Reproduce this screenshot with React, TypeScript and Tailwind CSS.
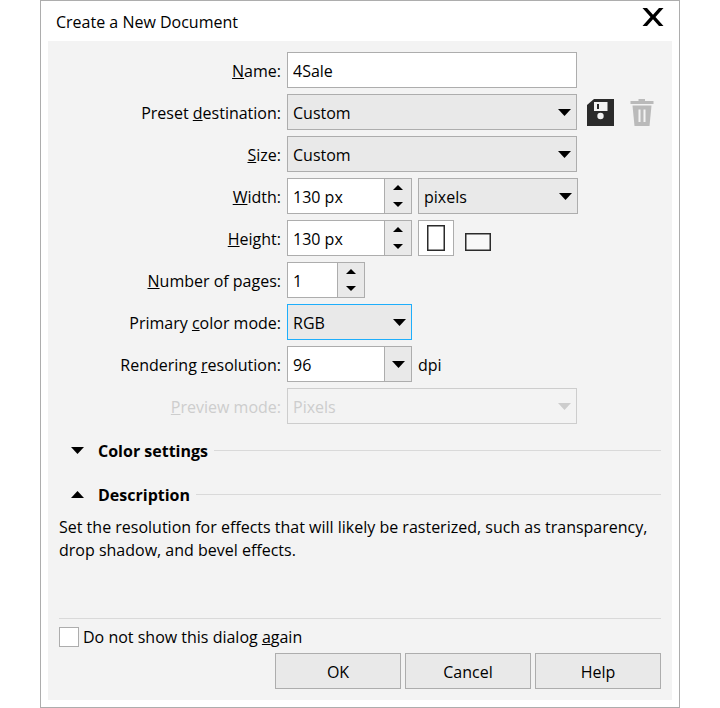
import { useState } from "react"
import type { ReactNode } from "react"
import clsx from "clsx"

// ─── Icons ───────────────────────────────────────────────────────────────────

function Caret({ up, small, className }: { up?: boolean; small?: boolean; className?: string }) {
  return (
    <svg
      width={small ? 10 : 13}
      height={small ? 5 : 7}
      viewBox="0 0 12 6"
      preserveAspectRatio="none"
      fill="currentColor"
      aria-hidden="true"
      className={className}
    >
      <path d={up ? "M0 6 6 0l6 6z" : "M0 0h12L6 6z"} />
    </svg>
  )
}

function CloseIcon() {
  return (
    <svg width="22" height="18" viewBox="0 0 22 18" fill="#000" aria-hidden="true">
      <path d="M.5 0h4.500L11 6.800 17 0h4.500l-8 9 8 9H17l-6-6.800L5 18H.5l8-9z" />
    </svg>
  )
}

function SaveIcon() {
  return (
    <svg width="27" height="27" viewBox="0 0 27 27" aria-hidden="true">
      <path d="M7 0h20v27H0V6z" fill="#2b2b2b" />
      <path d="M7 3h13.500v9H7z" fill="#f3f3f3" />
      <path d="M10 5h2v5h-2z" fill="#2b2b2b" />
      <circle cx="13.500" cy="17" r="3.200" fill="#f3f3f3" />
    </svg>
  )
}

function TrashIcon() {
  return (
    <svg width="24" height="27" viewBox="0 0 24 27" aria-hidden="true">
      <path d="M8.500 0h6.500v2h8.500v3H.5V2h8z" fill="#bababa" />
      <path d="M2.500 6.500h19L19.500 27h-15z" fill="#bababa" />
      <path d="M9.500 10.500v12.500M14.500 10.500v12.500" stroke="#f3f3f3" strokeWidth="2" />
    </svg>
  )
}

// ─── Form parts ──────────────────────────────────────────────────────────────

function Row({ id, label, disabled, children }: { id: string; label: ReactNode; disabled?: boolean; children: ReactNode }) {
  return (
    <div className="grid grid-cols-[222px_1fr] items-center gap-1.5">
      <label htmlFor={id} className={clsx("pt-0.5 text-right", disabled && "text-[#cdcdcd]")}>
        {label}
      </label>
      <div className="flex items-center gap-1.5">{children}</div>
    </div>
  )
}

function Key({ children }: { children: ReactNode }) {
  return <span className="underline decoration-1 underline-offset-1">{children}</span>
}

interface SelectProps {
  id?: string
  label?: string
  options: string[]
  className: string
  active?: boolean
  disabled?: boolean
}

function Select({ id, label, options, className, active, disabled }: SelectProps) {
  return (
    <div
      className={clsx(
        "relative h-9 border",
        active ? "border-[#1eaefb]" : disabled ? "border-[#cdcdcd]" : "border-[#adadad]",
        disabled ? "bg-[#f3f3f3] text-[#cdcdcd]" : "bg-[#e9e9e9]",
        className,
      )}
    >
      <select
        id={id}
        aria-label={label}
        disabled={disabled}
        className="h-full w-full appearance-none px-[5px] pt-0.5 outline-none disabled:opacity-100"
      >
        {options.map(o => (
          <option key={o}>{o}</option>
        ))}
      </select>
      <Caret className="pointer-events-none absolute right-[5px] top-3.5" />
    </div>
  )
}

interface SpinnerProps {
  id: string
  value: number
  unit?: string
  onChange: (value: number) => void
  className: string
}

function Spinner({ id, value, unit, onChange, className }: SpinnerProps) {
  return (
    <div className={clsx("flex h-9 border border-[#adadad] bg-white", className)}>
      <input
        id={id}
        value={unit ? `${value} ${unit}` : value}
        onChange={e => onChange(parseInt(e.target.value) || 0)}
        className="min-w-0 flex-1 px-[5px] pt-0.5 outline-none"
      />
      <div className="flex w-[27px] flex-col border-l border-[#adadad] bg-[#e9e9e9]">
        <button
          aria-label="Increase"
          onClick={() => onChange(value + 1)}
          className="flex flex-1 items-center justify-center"
        >
          <Caret up small />
        </button>
        <button
          aria-label="Decrease"
          onClick={() => onChange(Math.max(1, value - 1))}
          className="flex flex-1 items-center justify-center"
        >
          <Caret small />
        </button>
      </div>
    </div>
  )
}

function SectionHeader({ title, open, onToggle }: { title: string; open: boolean; onToggle: () => void }) {
  return (
    <div className="flex h-6 items-center gap-1.5">
      <button onClick={onToggle} aria-expanded={open} className="flex items-center gap-3.5 pl-3 font-bold">
        <Caret up={open} />
        <span className="pt-0.5">{title}</span>
      </button>
      <div className="h-px flex-1 bg-[#d9d9d9]" />
    </div>
  )
}

// ─── Dialog ──────────────────────────────────────────────────────────────────

export default function App() {
  const [name, setName] = useState("4Sale")
  const [width, setWidth] = useState(130)
  const [height, setHeight] = useState(130)
  const [pages, setPages] = useState(1)
  const [resolution, setResolution] = useState("96")
  const [portrait, setPortrait] = useState(true)
  const [colorOpen, setColorOpen] = useState(false)
  const [descriptionOpen, setDescriptionOpen] = useState(true)

  return (
    <div className="min-h-screen bg-white font-['Open_Sans','Noto_Sans',sans-serif] text-base leading-6 text-black">
      <div
        role="dialog"
        aria-labelledby="dialog-title"
        className="mx-auto flex min-h-screen w-full max-w-[640px] flex-col border border-[#adadad] bg-white px-[7px] pb-[7px]"
      >
        {/* Title bar */}
        <div className="flex h-10 items-center justify-between px-2">
          <h1 id="dialog-title" className="pt-0.5">Create a New Document</h1>
          <button aria-label="Close" className="pb-2">
            <CloseIcon />
          </button>
        </div>

        <div className="flex flex-1 flex-col bg-[#f3f3f3] px-[11px] py-[11px]">
          {/* Settings */}
          <div className="flex flex-col gap-1.5">
            <Row id="name" label={<><Key>N</Key>ame:</>}>
              <input
                id="name"
                value={name}
                onChange={e => setName(e.target.value)}
                className="h-9 w-[290px] border border-[#adadad] bg-white px-[5px] pt-0.5 outline-none"
              />
            </Row>
            <Row id="preset" label={<>Preset <Key>d</Key>estination:</>}>
              <Select id="preset" options={["Custom"]} className="w-[290px]" />
              <div className="flex items-center gap-4 pl-1">
                <button aria-label="Save preset"><SaveIcon /></button>
                <button aria-label="Delete preset" disabled><TrashIcon /></button>
              </div>
            </Row>
            <Row id="size" label={<><Key>S</Key>ize:</>}>
              <Select id="size" options={["Custom"]} className="w-[290px]" />
            </Row>
            <Row id="width" label={<><Key>W</Key>idth:</>}>
              <Spinner id="width" value={width} unit="px" onChange={setWidth} className="w-[125px]" />
              <Select label="Units" options={["pixels", "inches", "millimeters"]} className="w-40" />
            </Row>
            <Row id="height" label={<><Key>H</Key>eight:</>}>
              <Spinner id="height" value={height} unit="px" onChange={setHeight} className="w-[125px]" />
              <button
                aria-label="Portrait"
                aria-pressed={portrait}
                onClick={() => setPortrait(true)}
                className={clsx(
                  "flex size-9 items-center justify-center border",
                  portrait ? "border-[#adadad] bg-white" : "border-transparent",
                )}
              >
                <svg width="18" height="26" fill="#fff" stroke="#2b2b2b" strokeWidth="1.500" aria-hidden="true">
                  <path d="M.75.75h16.500v24.500H.75z" />
                </svg>
              </button>
              <button
                aria-label="Landscape"
                aria-pressed={!portrait}
                onClick={() => setPortrait(false)}
                className={clsx(
                  "flex size-9 items-center justify-center border pt-2",
                  portrait ? "border-transparent" : "border-[#adadad] bg-white",
                )}
              >
                <svg width="26" height="18" fill="#f8f8f8" stroke="#2b2b2b" strokeWidth="1.500" aria-hidden="true">
                  <path d="M.75.75h24.500v16.500H.75z" />
                </svg>
              </button>
            </Row>
            <Row id="pages" label={<><Key>N</Key>umber of pages:</>}>
              <Spinner id="pages" value={pages} onChange={setPages} className="w-[78px]" />
            </Row>
            <Row id="color-mode" label={<>Primary <Key>c</Key>olor mode:</>}>
              <Select id="color-mode" options={["RGB", "CMYK"]} className="w-[125px]" active />
            </Row>
            <Row id="resolution" label={<>Rendering <Key>r</Key>esolution:</>}>
              <div className="flex h-9 w-[125px] border border-[#adadad] bg-white">
                <input
                  id="resolution"
                  value={resolution}
                  onChange={e => setResolution(e.target.value)}
                  className="min-w-0 flex-1 px-[5px] pt-0.5 outline-none"
                />
                <button
                  aria-label="Choose resolution"
                  className="flex w-[27px] items-center justify-center border-l border-[#adadad] bg-[#e9e9e9]"
                >
                  <Caret />
                </button>
              </div>
              <span className="pt-0.5">dpi</span>
            </Row>
            <Row id="preview" label={<><Key>P</Key>review mode:</>} disabled>
              <Select id="preview" options={["Pixels"]} className="w-[290px]" disabled />
            </Row>
          </div>

          {/* Sections */}
          <div className="mt-3.5 flex flex-col gap-5">
            <SectionHeader title="Color settings" open={colorOpen} onToggle={() => setColorOpen(!colorOpen)} />
            <SectionHeader
              title="Description"
              open={descriptionOpen}
              onToggle={() => setDescriptionOpen(!descriptionOpen)}
            />
          </div>
          <div className="min-h-24 flex-1 pt-2.5">
            {descriptionOpen && (
              <p className="leading-[23px]">
                Set the resolution for effects that will likely be rasterized, such as transparency, drop shadow, and
                bevel effects.
              </p>
            )}
          </div>

          {/* Footer */}
          <div className="border-t border-[#d9d9d9] pt-1.5">
            <label className="flex w-fit items-center gap-1">
              <input type="checkbox" className="size-5 appearance-none border border-[#adadad] bg-white checked:bg-[#1eaefb]" />
              <span>Do not show this dialog <Key>a</Key>gain</span>
            </label>
          </div>
          <div className="mt-1 flex justify-end gap-1">
            {["OK", "Cancel", "Help"].map(text => (
              <button key={text} className="h-9 w-[126px] border border-[#adadad] bg-[#e9e9e9] pt-0.5">
                {text}
              </button>
            ))}
          </div>
        </div>
      </div>
    </div>
  )
}
